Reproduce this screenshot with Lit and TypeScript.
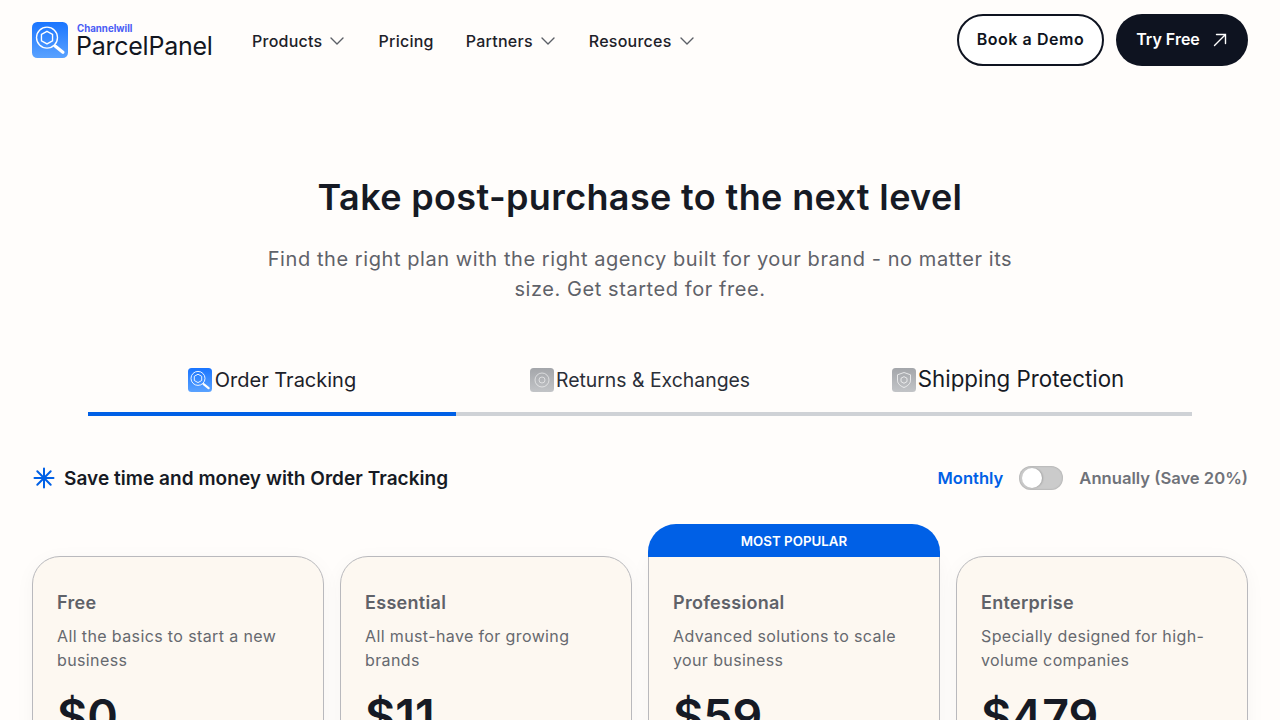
import { LitElement, html, css, svg } from "lit";
import { customElement } from "lit/decorators.js";

const chevron = html`<svg class="chev" width="16" height="8" viewBox="0 0 16 8" fill="none"><path d="M1 1l6 6 6-6" stroke="#5b5f66" stroke-width="1.4" stroke-linecap="round" stroke-linejoin="round"/></svg>`;

function appIcon(size: number, gradId: string, from: string, to: string, inner: unknown) {
  return html`<svg width="${size}" height="${size}" viewBox="0 0 24 24">
    <defs>
      <linearGradient id="${gradId}" x1="0" y1="0" x2="0" y2="1">
        <stop offset="0" stop-color="${from}"/><stop offset="1" stop-color="${to}"/>
      </linearGradient>
    </defs>
    <rect width="24" height="24" rx="3.5" fill="url(#${gradId})"/>
    ${inner}
  </svg>`;
}

const lens = svg`
  <circle cx="10" cy="10.4" r="7" fill="none" stroke="#fff" stroke-width=".9"/>
  <path d="M10 6.2l3.7 2.1v4.2L10 14.6l-3.7-2.1V8.3z" fill="none" stroke="#fff" stroke-width=".9"/>
  <path d="M15.6 16.2l5 4" stroke="#fff" stroke-width="2.2" stroke-linecap="round"/>`;

const rings = svg`
  <circle cx="12" cy="12" r="7" fill="none" stroke="#fff" stroke-opacity=".55" stroke-width="1"/>
  <circle cx="12" cy="12" r="3" fill="none" stroke="#fff" stroke-opacity=".55" stroke-width="1"/>`;

const shield = svg`
  <path d="M12 4.5l6.5 2.3v5.4c0 3.4-2.7 5.8-6.5 7.3-3.8-1.5-6.5-3.9-6.500-7.3V6.8z" fill="none" stroke="#fff" stroke-opacity=".7" stroke-width="1"/>
  <path d="M12 8.6l3 1.7v3.3l-3 1.7-3-1.7v-3.3z" fill="none" stroke="#fff" stroke-opacity=".7" stroke-width="1"/>`;

const plans = [
  { name: "Free", desc: "All the basics to start a new business", price: "$0" },
  { name: "Essential", desc: "All must-have for growing brands", price: "$11" },
  { name: "Professional", desc: "Advanced solutions to scale your business", price: "$59", popular: true },
  { name: "Enterprise", desc: "Specially designed for high-volume companies", price: "$479" },
];

@customElement("app-root")
export class AppRoot extends LitElement {
  static styles = css`
    :host {
      display: block;
      height: 720px;
      overflow: hidden;
      background: #fffdfb;
      color: #161a24;
      font-family: "Inter", "Open Sans", sans-serif;
    }

    /* Header */
    .header {
      display: flex;
      align-items: center;
      height: 80px;
      padding: 0 32px;
    }
    .logo {
      display: flex;
      align-items: center;
      gap: 8px;
      width: 220px;
    }
    .logo svg { display: block; }
    .logo-text { display: flex; flex-direction: column; padding-top: 2px; }
    .logo-top {
      font-size: 9.7px;
      line-height: 10px;
      font-weight: 700;
      color: #4a5cf5;
      margin-left: 1px;
    }
    .logo-name {
      font-size: 25px;
      line-height: 25px;
      font-weight: 400;
      letter-spacing: -0.25px;
      color: #12161f;
    }
    .nav { display: flex; align-items: center; padding-top: 2px; }
    .nav-item {
      display: flex;
      align-items: center;
      gap: 8px;
      font-size: 16px;
      font-weight: 500;
      letter-spacing: 0.25px;
      color: #1d2129;
      margin-right: 32px;
      white-space: nowrap;
    }
    .actions { margin-left: auto; display: flex; gap: 12px; }
    .btn {
      display: flex;
      align-items: center;
      justify-content: center;
      box-sizing: border-box;
      height: 52px;
      border-radius: 26px;
      font-size: 16px;
      font-weight: 600;
      white-space: nowrap;
    }
    .btn span { padding-bottom: 2px; }
    .btn-outline { width: 147px; border: 2px solid #0e1320; background: #fff; color: #0e1320; letter-spacing: 0.55px; }
    .btn-solid { width: 132px; gap: 12px; background: #0e1320; color: #fff; }

    /* Hero */
    .hero { text-align: center; padding-top: 92px; }
    .hero h1 {
      margin: 0;
      font-size: 36px;
      line-height: 50px;
      font-weight: 600;
      letter-spacing: 0.36px;
      color: #161a24;
    }
    .hero p {
      margin: 22px auto 0;
      width: 760px;
      font-size: 20px;
      line-height: 30px;
      letter-spacing: 0.57px;
      color: #5f6269;
    }

    /* Tabs */
    .tabs { display: flex; margin: 45px 88px 0; }
    .tab {
      flex: 1;
      display: flex;
      align-items: center;
      justify-content: center;
      gap: 3px;
      height: 67px;
      box-sizing: border-box;
      padding-bottom: 1px;
      border-bottom: 4px solid #cfd2d6;
      font-size: 20px;
      color: #2b2f38;
    }
    .tab svg { display: block; }
    .tab.active { border-bottom-color: #0060e6; color: #1d2129; }
    .tab.narrow { font-size: 19.4px; gap: 2px; }
    .tab.wide { font-size: 22.3px; gap: 2px; color: #161a24; }
    .tab.wide span { padding-bottom: 3px; }

    /* Plan row head */
    .plan-head {
      display: flex;
      align-items: center;
      justify-content: space-between;
      margin-top: 46px;
      padding: 0 32px;
      height: 32px;
    }
    .plan-title {
      display: flex;
      align-items: center;
      gap: 9px;
      font-size: 19px;
      font-weight: 600;
      letter-spacing: 0.05px;
      color: #161a24;
    }
    .plan-title svg { margin-left: 1px; }
    .billing { display: flex; align-items: center; gap: 16px; font-size: 16.6px; font-weight: 600; color: #6f7279; }
    .billing .on { color: #0060e6; }
    .switch {
      position: relative;
      width: 44px;
      height: 24px;
      border-radius: 12px;
      background: #cbcbcb;
      box-shadow: inset 0 0 2px rgba(0, 0, 0, 0.25);
    }
    .knob {
      position: absolute;
      left: 3px;
      top: 2px;
      width: 20px;
      height: 20px;
      border-radius: 50%;
      background: #fff;
      box-shadow: 1px 0 2px rgba(0, 0, 0, 0.2);
    }

    /* Cards */
    .cards {
      display: grid;
      grid-template-columns: repeat(4, 1fr);
      gap: 16px;
      margin-top: 62px;
      padding: 0 32px;
    }
    .card {
      position: relative;
      box-sizing: border-box;
      height: 400px;
      padding: 32px 24px;
      background: #fdf8f1;
      border: 1px solid #b9b9bd;
      border-radius: 28px;
      box-shadow: 0 4px 20px rgba(0, 0, 0, 0.04);
    }
    .card.popular { border-top-left-radius: 0; border-top-right-radius: 0; border-top: none; padding-top: 33px; }
    .badge {
      position: absolute;
      left: -1px;
      right: -1px;
      top: -32px;
      height: 33px;
      display: flex;
      align-items: center;
      justify-content: center;
      background: #0060e6;
      border-radius: 28px 28px 0 0;
      color: #fff;
      font-size: 13.3px;
      font-weight: 600;
    }
    .name { font-size: 18px; line-height: 28px; font-weight: 600; letter-spacing: 0.3px; color: #5f6269; }
    .desc { margin-top: 7px; font-size: 16px; line-height: 24px; letter-spacing: 0.38px; color: #66696f; height: 48px; }
    .price { margin-top: 11px; font-size: 46.5px; line-height: 66px; font-weight: 600; color: #161a24; }
  `;

  render() {
    return html`
      <header class="header">
        <div class="logo">
          ${appIcon(36, "g-logo", "#1a75ff", "#5aa2ff", lens)}
          <div class="logo-text">
            <span class="logo-top">Channelwill</span>
            <span class="logo-name">ParcelPanel</span>
          </div>
        </div>
        <nav class="nav">
          <span class="nav-item">Products ${chevron}</span>
          <span class="nav-item">Pricing</span>
          <span class="nav-item">Partners ${chevron}</span>
          <span class="nav-item">Resources ${chevron}</span>
        </nav>
        <div class="actions">
          <div class="btn btn-outline"><span>Book a Demo</span></div>
          <div class="btn btn-solid"><span>Try Free</span>
            <svg width="16" height="16" viewBox="0 0 16 16" fill="none"><path d="M2.5 13.5L13.5 2.5M4.5 2.5h9v9" stroke="#fff" stroke-width="1.4" stroke-linecap="round"/></svg>
          </div>
        </div>
      </header>

      <section class="hero">
        <h1>Take post-purchase to the next level</h1>
        <p>Find the right plan with the right agency built for your brand - no matter its size. Get started for free.</p>
      </section>

      <div class="tabs">
        <div class="tab active">${appIcon(24, "g-a", "#1a75ff", "#5aa2ff", lens)}<span>Order Tracking</span></div>
        <div class="tab narrow">${appIcon(24, "g-b", "#a4a6aa", "#c2c4c7", rings)}<span>Returns &amp; Exchanges</span></div>
        <div class="tab wide">${appIcon(24, "g-c", "#a4a6aa", "#c2c4c7", shield)}<span>Shipping Protection</span></div>
      </div>

      <div class="plan-head">
        <div class="plan-title">
          <svg width="22" height="22" viewBox="0 0 22 22" fill="none" stroke="#0060e6" stroke-width="2" stroke-linecap="round"><path d="M11 1.5v19M1.5 11h19M4.3 4.3l13.4 13.4M17.7 4.3L4.3 17.7"/></svg>
          Save time and money with Order Tracking
        </div>
        <div class="billing">
          <span class="on">Monthly</span>
          <span class="switch"><span class="knob"></span></span>
          <span>Annually (Save 20%)</span>
        </div>
      </div>

      <div class="cards">
        ${plans.map(
          (p) => html`
            <div class="card ${p.popular ? "popular" : ""}">
              ${p.popular ? html`<div class="badge">MOST POPULAR</div>` : ""}
              <div class="name">${p.name}</div>
              <div class="desc">${p.desc}</div>
              <div class="price">${p.price}</div>
            </div>
          `
        )}
      </div>
    `;
  }
}
